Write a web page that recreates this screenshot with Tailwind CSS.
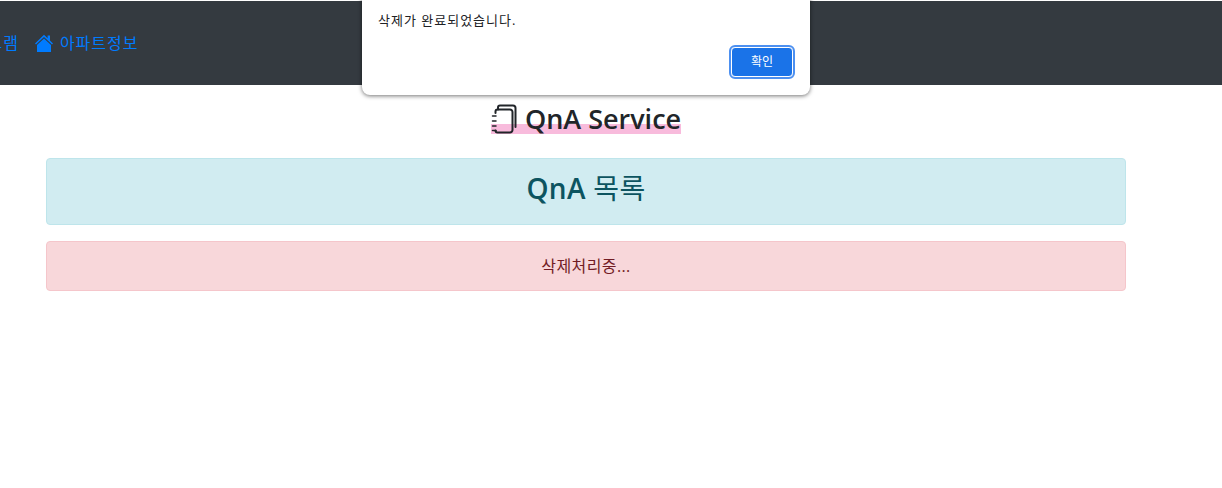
<!DOCTYPE html>
<html lang="ko">
<head>
  <meta charset="UTF-8">
  <title>QnA Service</title>
  <script src="https://cdn.jsdelivr.net/npm/@tailwindcss/browser@4"></script>
</head>
<body class="relative h-[488px] overflow-hidden bg-white font-['Open_Sans','Noto_Sans_CJK_KR',sans-serif] text-[#212529]">
  <!-- Navbar -->
  <nav class="mt-px flex h-[84px] items-center overflow-hidden bg-[#343a40] pb-px text-base tracking-[1px] text-[#007bff]">
    <a class="ml-[-44px] whitespace-nowrap">프로그램</a>
    <a class="ml-4 flex items-center whitespace-nowrap">
      <svg class="mr-[7px] h-[18px] w-[18px]" viewBox="0 0 18 18" fill="#007bff">
        <path d="M9 .8 12.6 4.2V1.6H15V6.5L18 9.4 17 10.5 9 3 1 10.5 0 9.4Z"/>
        <path d="M9 4.6 16 11.1V18H2V11.1Z"/>
      </svg>
      아파트정보
    </a>
  </nav>

  <!-- Alert dialog -->
  <div class="absolute left-[362px] top-[-10px] h-[105px] w-[448px] rounded-b-lg bg-white shadow-[0_1px_4px_rgba(0,0,0,0.55)]">
    <p class="absolute left-4 top-[21px] text-[13px] leading-[18px] tracking-[1px] text-[#202124]">삭제가 완료되었습니다.</p>
    <button class="absolute right-[17px] top-[57px] flex h-[30px] w-[62px] items-center justify-center rounded-[4px] border border-white bg-[#1a73e8] text-xs text-white outline-2 outline-[#4d90f0]">확인</button>
  </div>

  <!-- Content -->
  <main class="ml-[46px] w-[1080px]">
    <div class="mt-[17px] flex justify-center">
      <h2 class="flex h-8 items-center bg-[linear-gradient(transparent_70%,#f8bbdc_70%)] pt-0.5 text-[27px] leading-8 font-semibold">
        <svg class="mr-2 h-[30px] w-[26px]" viewBox="0 0 26 30" fill="none" stroke="#212529" stroke-width="2" stroke-linecap="round">
          <path d="M7 5.5V3.5A2 2 0 0 1 9 1.5H22A2.5 2.5 0 0 1 24.5 4V23"/>
          <path d="M4.5 9V7.5A2 2 0 0 1 6.5 5.5H19A2.5 2.5 0 0 1 21.5 8V26A2.5 2.5 0 0 1 19 28.5H6.500A2 2 0 0 1 4.500 26.500"/>
          <path d="M1.500 12H5M1.500 17H5M1.500 22H5M1.500 26.500H5" stroke-width="1.500"/>
        </svg>
        QnA Service
      </h2>
    </div>

    <div class="mt-6 flex h-[67px] items-center justify-center rounded border border-[#bee5eb] bg-[#d1ecf1] pb-2 text-[28px] tracking-[0.3px] text-[#0c5460]">
      <h3><span class="font-semibold">QnA</span> 목록</h3>
    </div>

    <div class="mt-4 flex h-[50px] items-center justify-center rounded border border-[#f5c6cb] bg-[#f8d7da] text-base tracking-[0.4px] text-[#721c24]">
      삭제처리중...
    </div>
  </main>
</body>
</html>
